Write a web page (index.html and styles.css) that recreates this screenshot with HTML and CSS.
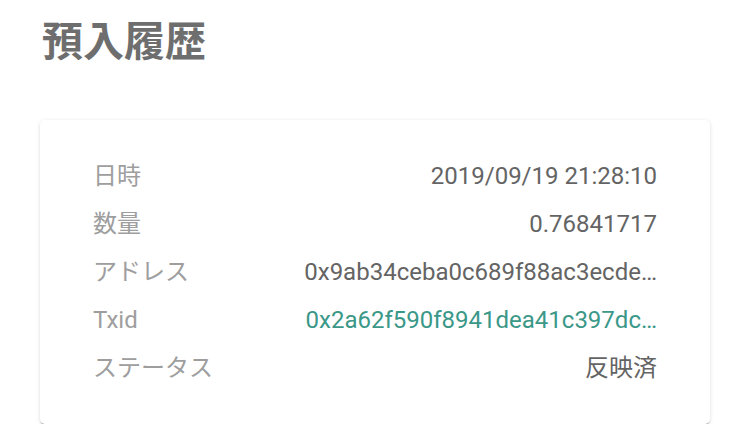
FILE: index.html
```html
<!DOCTYPE html>
<html lang="ja">
<head>
<meta charset="utf-8">
<link rel="stylesheet" href="styles.css">
</head>
<body>
<main class="page">
  <h1 class="title">預入履歴</h1>
  <section class="card">
    <div class="row"><span class="label">日時</span><span class="value">2019/09/19 21:28:10</span></div>
    <div class="row"><span class="label">数量</span><span class="value">0.76841717</span></div>
    <div class="row"><span class="label">アドレス</span><span class="value">0x9ab34ceba0c689f88ac3ecde…</span></div>
    <div class="row"><span class="label">Txid</span><span class="value link">0x2a62f590f8941dea41c397dc…</span></div>
    <div class="row"><span class="label">ステータス</span><span class="value">反映済</span></div>
  </section>
</main>
</body>
</html>
```
FILE: styles.css
```css
html, body {
  margin: 0;
  padding: 0;
  background: #ffffff;
}
body {
  font-family: Roboto, "Noto Sans CJK JP", sans-serif;
}
.page {
  padding: 10px 36px 0 40px;
}
.title {
  margin: 0 0 0 2px;
  font-family: "Noto Sans CJK JP", sans-serif;
  font-size: 41px;
  font-weight: 700;
  line-height: 56px;
  color: #6e6e6e;
}
.card {
  margin-top: 54px;
  background: #fff;
  border-radius: 5px;
  box-shadow: 0 2px 1px -1px rgba(0,0,0,0.18), 0 1px 1px 0 rgba(0,0,0,0.12), 0 1px 4px 0 rgba(0,0,0,0.12);
  padding: 32px 53px;
}
.row {
  display: flex;
  align-items: center;
  height: 48px;
  font-size: 24px;
  line-height: 28px;
}
.label {
  flex: 0 1 213px;
  min-width: 0;
  color: #9e9e9e;
  white-space: nowrap;
}
.value {
  flex: 1 0 auto;
  text-align: right;
  color: #646464;
  white-space: nowrap;
}
.link {
  color: #3b9888;
}
```
